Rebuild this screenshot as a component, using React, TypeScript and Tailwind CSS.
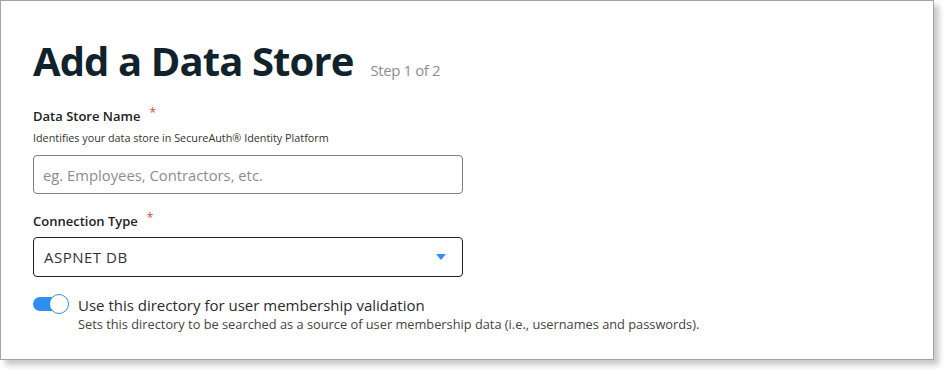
import { useState } from 'react'

const mont = "font-['Open_Sans','Liberation_Sans',sans-serif]"

function Label({ text }: { text: string }) {
  return (
    <div className="flex items-start gap-[9px]">
      <span className="text-[13px] font-semibold leading-[18px] text-[#222]">{text}</span>
      <span className="text-[12px] leading-[12px] text-[#e0453f]">*</span>
    </div>
  )
}

export default function App() {
  const [enabled, setEnabled] = useState(true)

  return (
    <div className={`h-[375px] w-[949px] bg-white ${mont}`}>
      <div className="h-[360px] w-[934px] border border-[#a3a3a3] bg-white pl-[32px] pt-[37px] shadow-[5px_5px_6px_rgba(0,0,0,0.22)]">
        <div className="flex items-baseline gap-[17px]">
          <h1 className="text-[40px] font-bold leading-[46px] tracking-[-0.9px] text-[#10232c]">
            Add a Data Store
          </h1>
          <span className="text-[15px] tracking-[-0.4px] text-[#8a8f93]">Step 1 of 2</span>
        </div>

        <div className="mt-[23px]">
          <Label text="Data Store Name" />
          <p className="mt-[6px] text-[10.8px] leading-[14px] text-[#333]">
            Identifies your data store in SecureAuth® Identity Platform
          </p>
          <input
            type="text"
            placeholder="eg. Employees, Contractors, etc."
            className="mt-[10px] h-[39px] w-[430px] rounded-[4px] border border-[#77838b] px-[9px] text-[14.8px] text-[#333] placeholder:text-[#8c8c8c] focus:outline-none"
          />
        </div>

        <div className="mt-[18px]">
          <Label text="Connection Type" />
          <div className="mt-[7px] flex h-[40px] w-[430px] items-center justify-between rounded-[4px] border border-[#222] pl-[10px] pr-[16px]">
            <span className="text-[15px] tracking-[0.5px] text-[#333]">ASPNET DB</span>
            <svg width="10" height="6" viewBox="0 0 10 6">
              <path d="M0 0h10L5 6z" fill="#2f8ff0" />
            </svg>
          </div>
        </div>

        <div className="mt-[19px] flex items-start gap-[10px]">
          <button
            onClick={() => setEnabled((e) => !e)}
            className={`relative mt-[1px] h-[14px] w-[35px] shrink-0 rounded-full ${enabled ? 'bg-[#2f8ff0]' : 'bg-[#bbb]'}`}
          >
            <span
              className={`absolute top-[-3px] h-[20px] w-[20px] rounded-full border-[1.5px] border-[#2f8ff0] bg-white ${enabled ? 'right-[-1px]' : 'left-[-1px]'}`}
            />
          </button>
          <div>
            <div className="text-[15px] leading-[18px] text-[#2b2b2b]">
              Use this directory for user membership validation
            </div>
            <div className="mt-[3px] text-[12.8px] leading-[15px] text-[#444]">
              Sets this directory to be searched as a source of user membership data (i.e., usernames and passwords).
            </div>
          </div>
        </div>
      </div>
    </div>
  )
}
